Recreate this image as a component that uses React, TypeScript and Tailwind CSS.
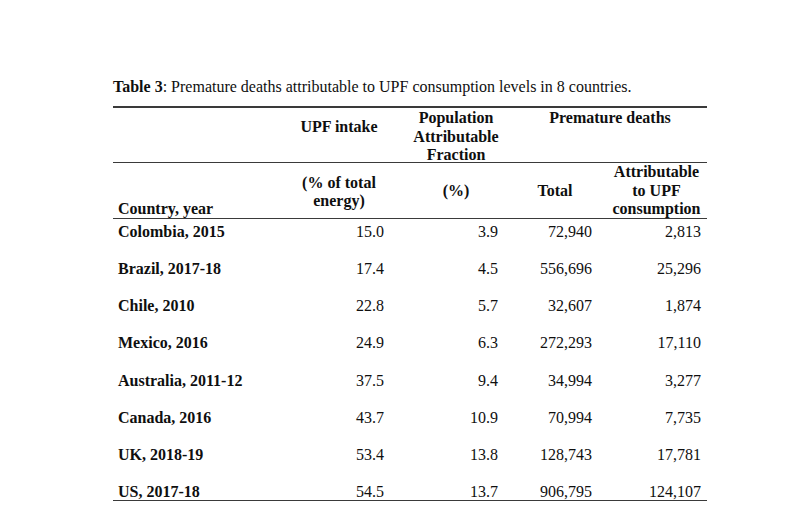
import React from 'react';

type Row = {
  country: string;
  upf: string;
  paf: string;
  total: string;
  attributable: string;
};

const rows: Row[] = [
  { country: 'Colombia, 2015', upf: '15.0', paf: '3.9', total: '72,940', attributable: '2,813' },
  { country: 'Brazil, 2017-18', upf: '17.4', paf: '4.5', total: '556,696', attributable: '25,296' },
  { country: 'Chile, 2010', upf: '22.8', paf: '5.7', total: '32,607', attributable: '1,874' },
  { country: 'Mexico, 2016', upf: '24.9', paf: '6.3', total: '272,293', attributable: '17,110' },
  { country: 'Australia, 2011-12', upf: '37.5', paf: '9.4', total: '34,994', attributable: '3,277' },
  { country: 'Canada, 2016', upf: '43.7', paf: '10.9', total: '70,994', attributable: '7,735' },
  { country: 'UK, 2018-19', upf: '53.4', paf: '13.8', total: '128,743', attributable: '17,781' },
  { country: 'US, 2017-18', upf: '54.5', paf: '13.7', total: '906,795', attributable: '124,107' },
];

// column widths: 176 | 120 | 98 | 100 | 99
const cols = 'grid grid-cols-[176px_120px_98px_100px_99px]';

export default function App() {
  return (
    <div className="h-[530px] w-[800px] bg-white font-['Liberation_Serif','Times_New_Roman',serif] text-[16px] leading-[18.5px] text-[#0f0f0f]">
      <div className="pl-[113px] pt-[78px]">
        <div className="w-[594px]">
          <p className="text-[16px] leading-[18px]">
            <span className="font-bold">Table 3</span>: Premature deaths attributable to UPF consumption levels in 8 countries.
          </p>

          <div className="mt-[10px] border-t-2 border-[#3a3a3a]">
            {/* header row 1 */}
            <div className={`${cols} h-[55px] border-b-[1.5px] border-[#3a3a3a] font-bold`}>
              <div />
              <div className="pr-[20px] pt-[10px] text-center">UPF intake</div>
              <div className="pr-[4px] pt-[1px] text-center">
                Population
                <br />
                Attributable
                <br />
                Fraction
              </div>
              <div className="col-span-2 pl-[7px] pt-[1px] text-center">Premature deaths</div>
            </div>

            {/* header row 2 */}
            <div className={`${cols} h-[56px] items-end border-b border-[#3a3a3a] font-bold`}>
              <div className="pl-[5px]">Country, year</div>
              <div className="pr-[20px] pb-[8px] text-center">
                (% of total
                <br />
                energy)
              </div>
              <div className="pr-[4px] pb-[18px] text-center">(%)</div>
              <div className="pr-[4px] pb-[18px] text-center">Total</div>
              <div className="text-center">
                Attributable
                <br />
                to UPF
                <br />
                consumption
              </div>
            </div>

            {/* body */}
            <div className="border-b border-[#3a3a3a]">
              {rows.map((r, i) => (
                <div
                  key={r.country}
                  className={`${cols} ${i === rows.length - 1 ? 'h-[21px]' : 'h-[37.15px]'} pt-[4px]`}
                >
                  <div className="pl-[5px] font-bold">{r.country}</div>
                  <div className="pr-[25px] text-right">{r.upf}</div>
                  <div className="pr-[9px] text-right">{r.paf}</div>
                  <div className="pr-[15px] text-right">{r.total}</div>
                  <div className="pr-[5px] text-right">{r.attributable}</div>
                </div>
              ))}
            </div>
          </div>
        </div>
      </div>
    </div>
  );
}
